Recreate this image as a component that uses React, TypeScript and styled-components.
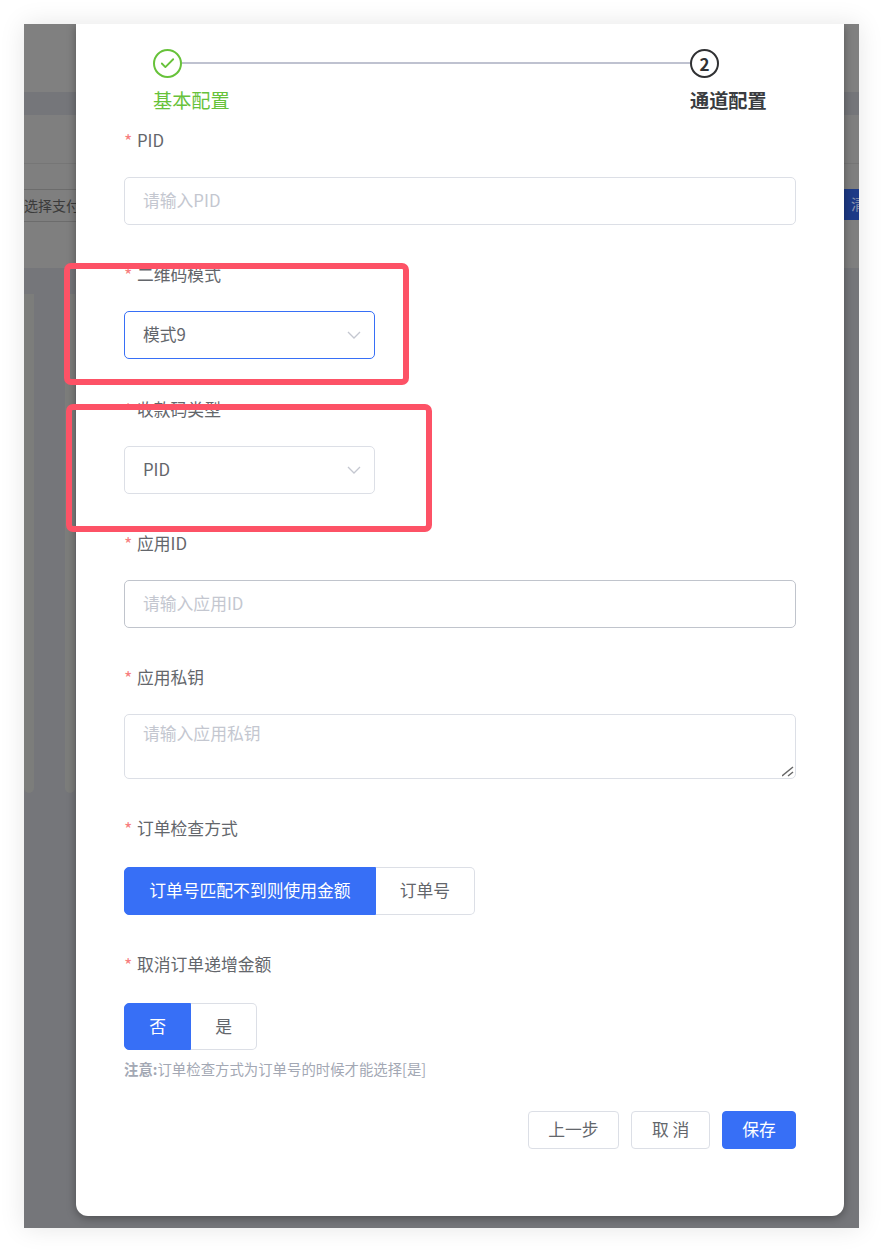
import styled, { createGlobalStyle } from 'styled-components';
import { Check } from 'lucide-react';

const GlobalStyle = createGlobalStyle`
  html, body {
    margin: 0;
    padding: 0;
    background: #ffffff;
  }

  body {
    width: 883px;
    height: 1252px;
    overflow: hidden;
    font-family: "Noto Sans CJK SC", "Noto Sans", sans-serif;
  }

  * {
    box-sizing: border-box;
  }
`;

// Page dimmed behind the dialog
const Frame = styled.div`
  position: relative;
  margin: 24px;
  width: 835px;
  height: 1204px;
  overflow: hidden;
  background: #75767a;
  box-shadow: 0 0 24px rgba(0, 0, 0, 0.1);
`;

const TopBar = styled.div`
  height: 68px;
  background: #808080;
`;

const Band = styled.div`
  height: 23px;
  background: #75767a;
`;

const Panel = styled.div`
  height: 153px;
  background: #7f7f7f;
`;

const PanelHead = styled.div`
  height: 49px;
  border-bottom: 1px solid #767676;
`;

const FilterRow = styled.div`
  display: flex;
  justify-content: space-between;
  margin-top: 25px;
  height: 33px;
`;

const FilterSelect = styled.div`
  width: 200px;
  height: 33px;
  border-top: 1px solid #6c6c6c;
  border-bottom: 1px solid #6c6c6c;
  color: #3b3b3b;
  font-size: 14px;
  line-height: 30px;
  white-space: nowrap;
`;

const FilterButton = styled.div`
  width: 15px;
  height: 31px;
  padding-left: 7px;
  overflow: hidden;
  background: #1d3a87;
  color: #8b95ad;
  font-size: 15px;
  line-height: 30px;
  white-space: nowrap;
`;

const CardRow = styled.div`
  display: flex;
  gap: 31px;
  padding-top: 26px;
`;

const BackCard = styled.div`
  width: 10px;
  height: 499px;
  background: #7c7d7b;
  border-radius: 0 0 6px 6px;
`;

// Dialog
const Modal = styled.div`
  position: absolute;
  left: 52px;
  top: 0;
  width: 768px;
  height: 1192px;
  padding: 25px 48px 0;
  background: #ffffff;
  border-radius: 0 0 12px 12px;
  box-shadow: 0 2px 10px rgba(0, 0, 0, 0.35);
`;

const Steps = styled.div`
  display: flex;
  padding: 0 29px;
  margin-bottom: 14.8px;
`;

const Step = styled.div<{ $grow?: boolean }>`
  flex: ${({ $grow }) => ($grow ? 1 : '0 0 77px')};
`;

const StepHead = styled.div`
  display: flex;
  align-items: center;
`;

const StepCircle = styled.div<{ $done?: boolean }>`
  display: flex;
  align-items: center;
  justify-content: center;
  flex: 0 0 29px;
  height: 29px;
  padding-bottom: 1px;
  border: 2px solid ${({ $done }) => ($done ? '#67c23a' : '#303133')};
  border-radius: 50%;
  color: ${({ $done }) => ($done ? '#67c23a' : '#303133')};
  font-size: 17px;
  font-weight: 700;
`;

const StepLine = styled.div`
  flex: 1;
  height: 2px;
  margin-bottom: 1px;
  background: #bfc2d0;
`;

const StepTitle = styled.div<{ $done?: boolean }>`
  margin-top: 8px;
  font-size: 19.2px;
  line-height: 28px;
  white-space: nowrap;
  color: ${({ $done }) => ($done ? '#67c23a' : '#3a3c40')};
  font-weight: ${({ $done }) => ($done ? 400 : 700)};
`;

const Field = styled.div`
  margin-bottom: 38.4px;
`;

const Label = styled.div<{ $gap?: number }>`
  display: flex;
  height: 24px;
  margin-bottom: ${({ $gap }) => $gap ?? 24}px;
  color: #63666b;
  font-size: 16.8px;
  line-height: 22px;
`;

const Star = styled.span`
  width: 13px;
  color: #f77f7f;
  font-size: 18px;
`;

const TextInput = styled.input<{ $hover?: boolean }>`
  display: block;
  width: 100%;
  height: 48px;
  padding: 0 18px 2px;
  border: 1px solid ${({ $hover }) => ($hover ? '#c0c4cc' : '#dcdfe6')};
  border-radius: 5px;
  outline: none;
  background: #ffffff;
  color: #63666b;
  font-family: inherit;
  font-size: 16.8px;

  &::placeholder {
    color: #c4c7d0;
    opacity: 1;
  }
`;

const AreaBox = styled.div`
  position: relative;
`;

const TextArea = styled.textarea`
  display: block;
  width: 100%;
  height: 64.6px;
  padding: 6px 18px;
  border: 1px solid #dcdfe6;
  border-radius: 5px;
  outline: none;
  resize: none;
  background: #ffffff;
  color: #63666b;
  font-family: inherit;
  font-size: 16.8px;
  line-height: 24px;

  &::placeholder {
    color: #c4c7d0;
    opacity: 1;
  }
`;

const ResizeHandle = styled.svg`
  position: absolute;
  right: 2px;
  bottom: 2px;
  width: 12px;
  height: 12px;
  stroke: #666666;
  stroke-width: 1.4;
`;

const Select = styled.div<{ $focus?: boolean }>`
  display: flex;
  align-items: center;
  justify-content: space-between;
  width: 251px;
  height: 48px;
  padding: 0 14px 2px 18px;
  border: 1px solid ${({ $focus }) => ($focus ? '#376ff6' : '#dcdfe6')};
  border-radius: 5px;
  color: #63666b;
  font-size: 16.8px;
`;

const Chevron = styled.svg`
  width: 14px;
  height: 8px;
  margin-top: 2px;
  margin-right: -1px;
  fill: none;
  stroke: #c4c7d0;
  stroke-width: 1.3;
`;

const RadioGroup = styled.div<{ $height: number }>`
  display: flex;
  height: ${({ $height }) => $height}px;
`;

const RadioButton = styled.div<{ $active?: boolean }>`
  display: flex;
  align-items: center;
  padding: 0 24.2px 2px;
  border: 1px solid ${({ $active }) => ($active ? '#376ff6' : '#dcdfe6')};
  background: ${({ $active }) => ($active ? '#376ff6' : '#ffffff')};
  color: ${({ $active }) => ($active ? '#ffffff' : '#63666b')};
  font-size: 16.8px;

  &:first-child {
    border-radius: 5px 0 0 5px;
  }

  &:last-child {
    padding: 0 24px 2px;
    border-left-width: 0;
    border-radius: 0 5px 5px 0;
  }
`;

const Note = styled.div`
  margin-top: 9px;
  color: #a3a8b4;
  font-size: 14.4px;
  line-height: 20px;

  b {
    font-weight: 700;
  }
`;

const Footer = styled.div`
  display: flex;
  justify-content: flex-end;
  gap: 12px;
  margin-top: 32px;
`;

const Button = styled.div<{ $primary?: boolean }>`
  display: flex;
  align-items: center;
  height: 38px;
  padding: 0 ${({ $primary }) => ($primary ? 19.2 : 19.7)}px 2px;
  border: 1px solid ${({ $primary }) => ($primary ? '#376ff6' : '#dcdfe6')};
  border-radius: 4px;
  background: ${({ $primary }) => ($primary ? '#376ff6' : '#ffffff')};
  color: ${({ $primary }) => ($primary ? '#ffffff' : '#63666b')};
  font-size: 16.8px;
  white-space: pre;
`;

// Red marks drawn on top of the screenshot
const Mark = styled.div<{ $x: number; $y: number; $w: number; $h: number }>`
  position: absolute;
  left: ${({ $x }) => $x}px;
  top: ${({ $y }) => $y}px;
  width: ${({ $w }) => $w}px;
  height: ${({ $h }) => $h}px;
  border: 6px solid #fd5266;
  border-radius: 7px;
`;

const SelectArrow = () => (
  <Chevron viewBox="0 0 14 8">
    <polyline points="1,1 7,7 13,1" />
  </Chevron>
);

const App = () => {
  return (
    <>
      <GlobalStyle />
      <Frame>
        <TopBar />
        <Band />
        <Panel>
          <PanelHead />
          <FilterRow>
            <FilterSelect>选择支付方式</FilterSelect>
            <FilterButton>清空</FilterButton>
          </FilterRow>
        </Panel>
        <CardRow>
          <BackCard />
          <BackCard />
        </CardRow>

        <Modal>
          <Steps>
            <Step $grow>
              <StepHead>
                <StepCircle $done>
                  <Check size={17} strokeWidth={2.6} />
                </StepCircle>
                <StepLine />
              </StepHead>
              <StepTitle $done>基本配置</StepTitle>
            </Step>
            <Step>
              <StepHead>
                <StepCircle>2</StepCircle>
              </StepHead>
              <StepTitle>通道配置</StepTitle>
            </Step>
          </Steps>

          <Field>
            <Label><Star>*</Star>PID</Label>
            <TextInput readOnly placeholder="请输入PID" />
          </Field>
          <Field>
            <Label><Star>*</Star>二维码模式</Label>
            <Select $focus>模式9<SelectArrow /></Select>
          </Field>
          <Field>
            <Label><Star>*</Star>收款码类型</Label>
            <Select>PID<SelectArrow /></Select>
          </Field>
          <Field>
            <Label><Star>*</Star>应用ID</Label>
            <TextInput $hover readOnly placeholder="请输入应用ID" />
          </Field>
          <Field>
            <Label><Star>*</Star>应用私钥</Label>
            <AreaBox>
              <TextArea readOnly placeholder="请输入应用私钥" />
              <ResizeHandle viewBox="0 0 12 12">
                <line x1="0" y1="11" x2="11" y2="2" />
                <line x1="6" y1="11" x2="11" y2="7" />
              </ResizeHandle>
            </AreaBox>
          </Field>
          <Field>
            <Label $gap={25.6}><Star>*</Star>订单检查方式</Label>
            <RadioGroup $height={48}>
              <RadioButton $active>订单号匹配不到则使用金额</RadioButton>
              <RadioButton>订单号</RadioButton>
            </RadioGroup>
          </Field>
          <div>
            <Label $gap={26}><Star>*</Star>取消订单递增金额</Label>
            <RadioGroup $height={47}>
              <RadioButton $active>否</RadioButton>
              <RadioButton>是</RadioButton>
            </RadioGroup>
            <Note><b>注意:</b>订单检查方式为订单号的时候才能选择[是]</Note>
          </div>

          <Footer>
            <Button>上一步</Button>
            <Button>取 消</Button>
            <Button $primary>保存</Button>
          </Footer>
        </Modal>

        <Mark $x={40} $y={239} $w={345} $h={122} />
        <Mark $x={42} $y={380} $w={366} $h={128} />
      </Frame>
    </>
  );
};

export default App;
